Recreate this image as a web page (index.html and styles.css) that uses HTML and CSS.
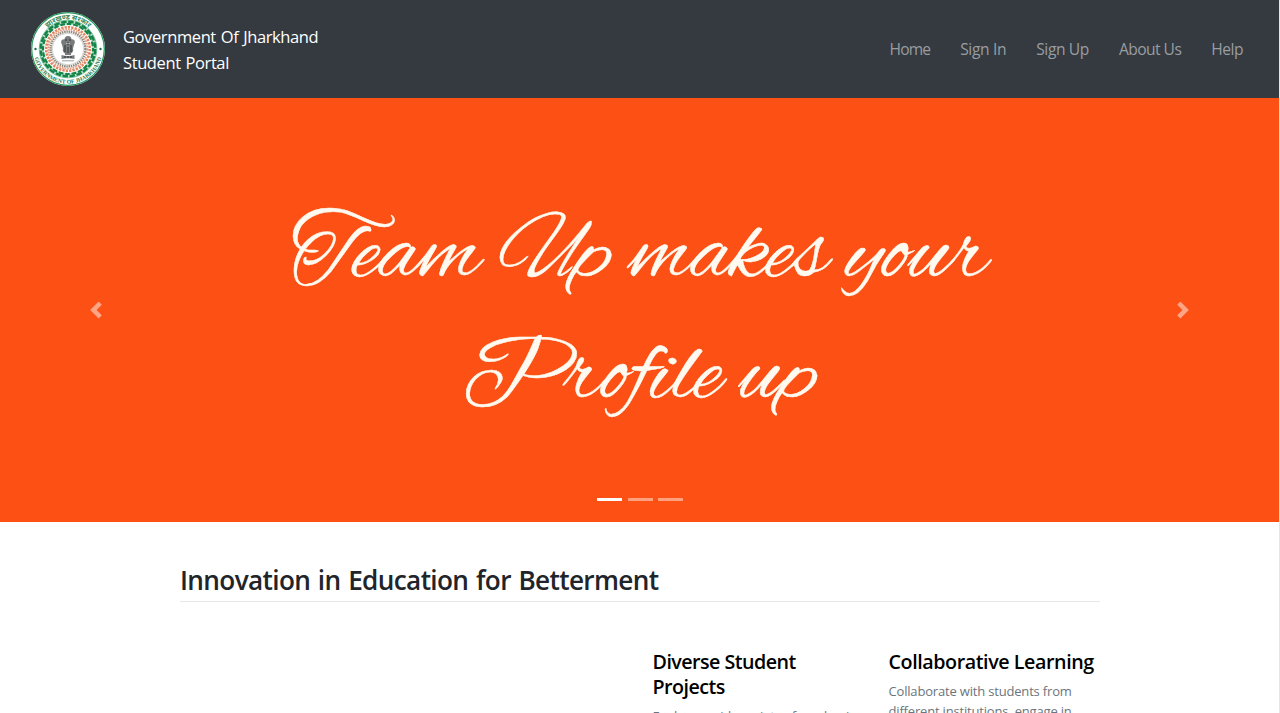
FILE: index.html
```html
<!DOCTYPE html>
<html lang="en">
<head>
<meta charset="utf-8">
<title>Government Of Jharkhand Student Portal</title>
<link rel="stylesheet" href="styles.css">
</head>
<body>
<header class="navbar">
  <a class="brand">
    <svg class="emblem" viewBox="0 0 76 76">
      <defs>
        <path id="arc-top" d="M8.500 38a29.500 29.500 0 0 1 59 0"/>
        <path id="arc-bottom" d="M3.300 38a34.700 34.700 0 0 0 69.400 0"/>
      </defs>
      <circle cx="38" cy="38" r="37" fill="#fff"/>
      <circle cx="38" cy="38" r="36.300" fill="none" stroke="#23985a" stroke-width="1.200"/>
      <circle cx="38" cy="38" r="28.800" fill="none" stroke="#35a366" stroke-width=".7"/>
      <circle cx="38" cy="38" r="26.200" fill="none" stroke="#b9dec7" stroke-width="4"/>
      <g fill="none" stroke="#138348">
        <circle cx="38" cy="38" r="27.200" stroke-width="2.400" stroke-dasharray="5.500 1.621"/>
        <circle cx="38" cy="38" r="25" stroke-width="2.200" stroke-dasharray="4.600 1.945" stroke-dashoffset="2"/>
      </g>
      <circle cx="38" cy="38" r="21.800" fill="none" stroke="#e28560" stroke-width="2.600" stroke-dasharray="2.300 1.100"/>
      <circle cx="38" cy="38" r="19.600" fill="none" stroke="#e59d7e" stroke-width="1.800" stroke-dasharray="1.700 1"/>
      <circle cx="38" cy="38" r="17.400" fill="none" stroke="#8f887d" stroke-width="2.400" stroke-dasharray="1.500 .780"/>
      <circle cx="38" cy="38" r="15.800" fill="#fff" stroke="#b7b5ac" stroke-width=".6"/>
      <g fill="#777b7c">
        <circle cx="38" cy="28.500" r="3.500"/><circle cx="34" cy="31" r="2.800"/><circle cx="42" cy="31" r="2.800"/>
        <path d="M31.500 31.500q6.500 3 13 0l-1.500 6q1 3-2 5h-6q-3-2-2-5zM35 42h6v2h-6zM31.500 44q6.500 2 13 0v4q-6.500-1.500-13 0zM32 49.500h12v.8H32z"/>
      </g>
      <path d="M36 28v2M40 28v2M38 31v3M35 34v7M38 36v6M41 34v7M34 46h2M37 46h2M40 46h2" stroke="#303638"/>
      <circle cx="5.500" cy="38" r="1.200" fill="#246b49"/><circle cx="70.500" cy="38" r="1.200" fill="#246b49"/>
      <text class="seal-hindi"><textPath href="#arc-top" startOffset="50%" text-anchor="middle">झारखण्ड सरकार</textPath></text>
      <text class="seal-name"><textPath href="#arc-bottom" startOffset="50%" text-anchor="middle" textLength="91">GOVERNMENT OF JHARKHAND</textPath></text>
    </svg>
    <span class="brand-name"><span class="brand-line">Government Of Jharkhand</span><span class="brand-line">Student Portal</span></span>
  </a>
  <nav class="menu">
    <a class="home">Home</a><a class="sign-in">Sign In</a><a class="sign-up">Sign Up</a><a class="about">About Us</a><a class="help">Help</a>
  </nav>
</header>
<section class="carousel">
  <svg class="arrow" viewBox="0 0 8 8"><path d="M5.250 0l-4 4 4 4 1.500-1.500L4.250 4l2.500-2.500z"/></svg>
  <h1 class="slogan"><span>Team Up makes your</span><span>Profile up</span></h1>
  <svg class="arrow" viewBox="0 0 8 8"><path d="M2.750 0l-1.500 1.500L3.750 4l-2.500 2.500L2.750 8l4-4z"/></svg>
  <div class="indicators"><i class="active"></i><i></i><i></i></div>
</section>
<main class="content">
  <h2 class="title"><span>Innovation in Education for Betterment</span></h2>
  <div class="features">
    <article><h3 class="diverse">Diverse Student<br>Projects</h3><p class="explore">Explore a wide variety of academic projects</p></article>
    <article><h3 class="collaborative">Collaborative Learning</h3><p>Collaborate with students from<br>different institutions, engage in</p></article>
  </div>
</main>
</body>
</html>
```

FILE: styles.css
```css
* { box-sizing: border-box; }
body { margin: 0; height: 713px; overflow: hidden; background: #fff; color: #212529; font: 16px/24px "Segoe UI", "Open Sans", "Noto Sans", sans-serif; border-right: 1px solid #e5e5e5; }
h1, h2, h3, p { margin: 0; font-weight: inherit; }
.navbar { height: 98px; padding: 0 36px 0 30px; background: #343a40; display: flex; align-items: center; justify-content: space-between; }
.brand { display: flex; align-items: center; gap: 17px; color: #fff; }
.emblem { width: 76px; height: 76px; }
.seal-hindi { font: bold 7px "Noto Sans", sans-serif; fill: #32895b; }
.seal-name { font: bold 5.800px "Liberation Serif", serif; fill: #247b4e; }
.brand-name { display: flex; flex-direction: column; padding-top: 2px; }
.brand-line { font-size: 16.500px; line-height: 26px; white-space: nowrap; letter-spacing: -.400px; word-spacing: 1px; }
.menu { display: flex; gap: 30px; color: #999da0; font-size: 15.600px; white-space: nowrap; }
.home { letter-spacing: -.850px; }
.sign-in { letter-spacing: -.350px; }
.sign-up { letter-spacing: -.400px; }
.about { letter-spacing: -.550px; }
.help { letter-spacing: -.500px; }
.carousel { position: relative; height: 424px; padding: 0 86px; display: flex; align-items: center; justify-content: space-between; background: #fd5015; }
.arrow { width: 20px; height: 20px; padding: 1.500px; fill: #ffa586; }
.slogan { display: flex; flex-direction: column; align-items: center; padding-top: 16px; color: #fffaf0; font: 96px/121px "Alex Brush", "Great Vibes", "Liberation Serif", serif; -webkit-text-stroke: .400px #fffaf0; white-space: nowrap; }
.indicators { position: absolute; left: 597px; bottom: 21px; display: flex; gap: 5.500px; }
.indicators i { width: 25px; height: 3px; background: #ffa17f; }
.indicators .active { background: #fff; }
.content { width: 920px; margin-left: 180px; padding-top: 40px; }
.title { height: 40px; border-bottom: 1px solid #e5e7e9; font-size: 26.200px; line-height: 36px; font-weight: 600; letter-spacing: -.650px; word-spacing: 1.500px; white-space: nowrap; }
.features { display: grid; grid-template-columns: 206px 210px; gap: 30px; margin: 48px 0 0 472.500px; }
.features h3 { color: #000; font-size: 19.700px; line-height: 24.500px; font-weight: 600; white-space: nowrap; }
.diverse { letter-spacing: -.540px; }
.collaborative { letter-spacing: -.430px; }
.features p { color: #6c757d; font-size: 13px; line-height: 20px; margin-top: 6.500px; white-space: nowrap; letter-spacing: -.180px; }
.explore { width: 202px; overflow: hidden; }
```
